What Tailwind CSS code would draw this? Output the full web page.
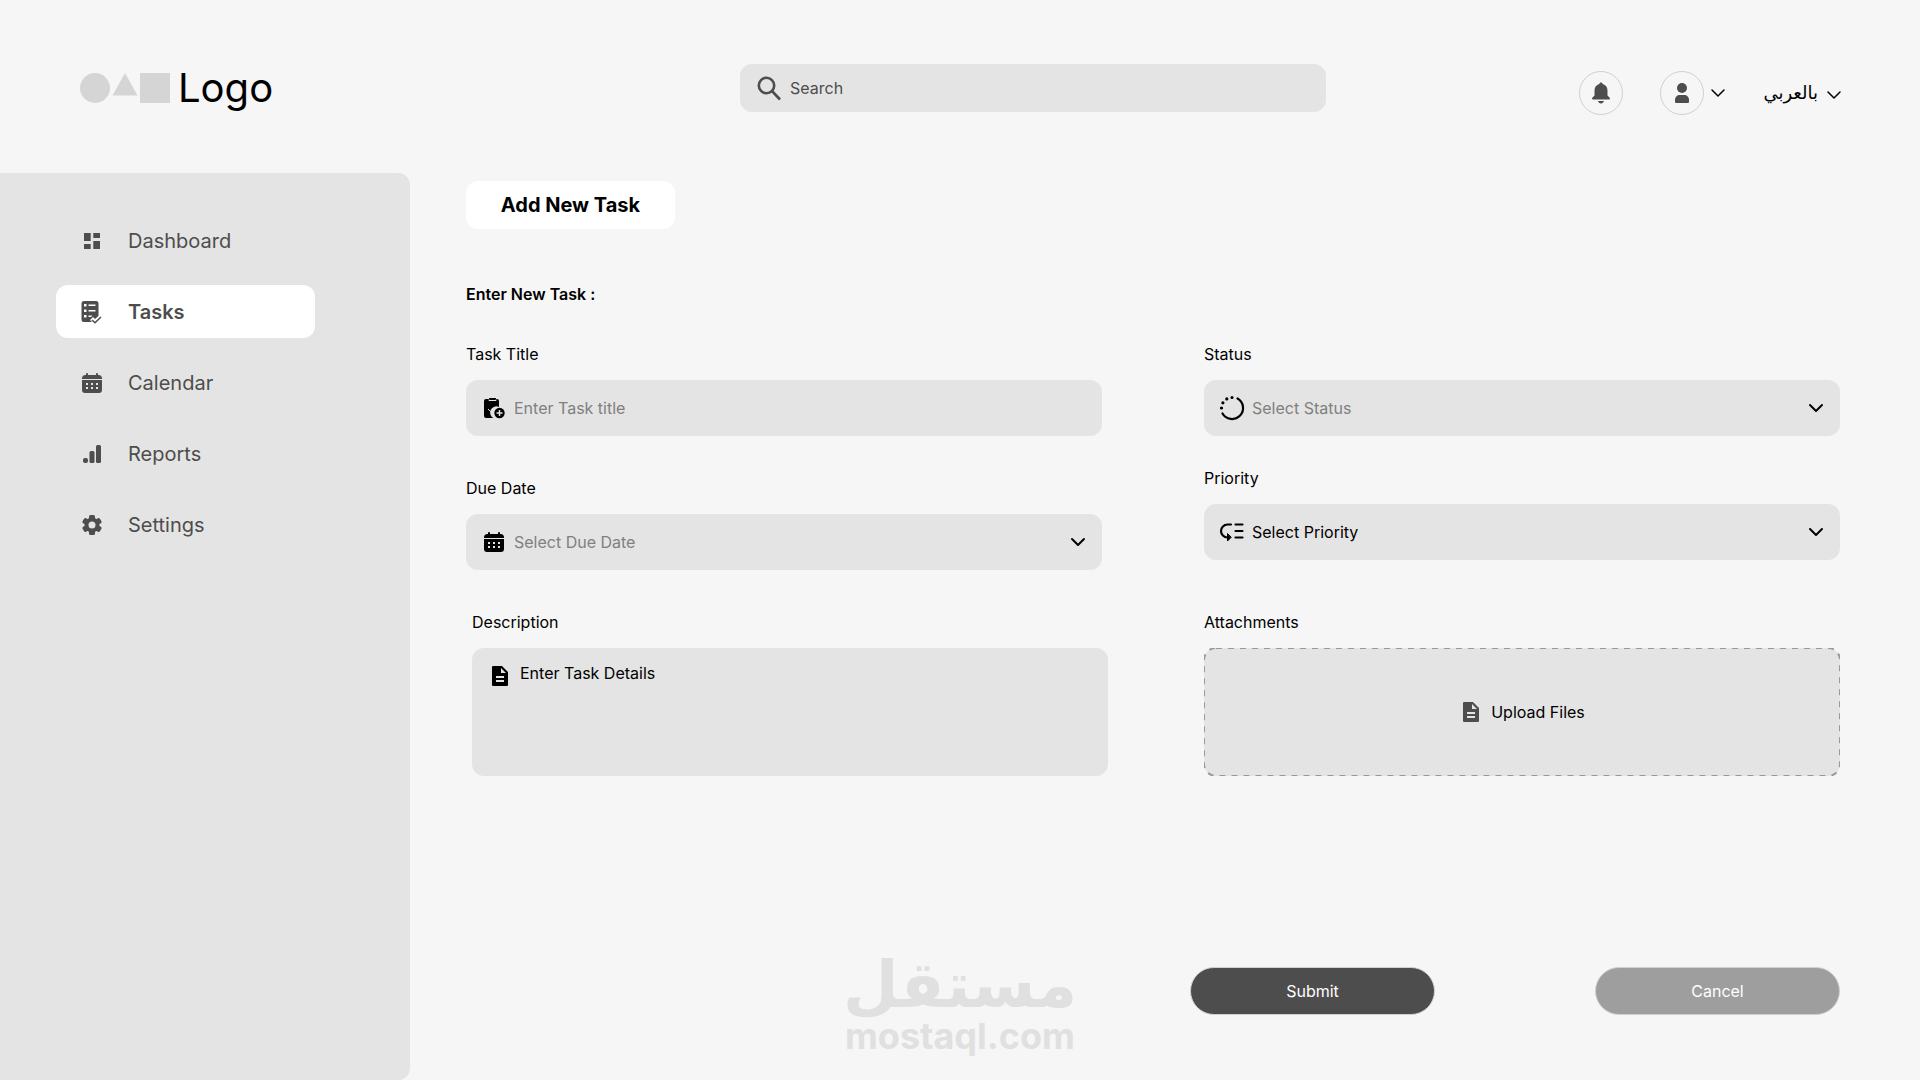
<!DOCTYPE html>
<html lang="en">
<head>
    <meta charset="UTF-8">
    <meta name="viewport" content="width=device-width, initial-scale=1.0">
    <title>Add New Task</title>
    <script src="https://cdn.jsdelivr.net/npm/@tailwindcss/browser@4"></script>
</head>
<body class="relative flex min-h-screen flex-col bg-[#f6f6f6] font-['Inter','DejaVu_Sans',sans-serif] text-base text-black">

    <!-- shared icons -->
    <svg class="hidden">
        <symbol id="calendar" viewBox="0 0 24 24">
            <path fill="currentColor" d="M6 3a1 1 0 0 1 2 0v1h8V3a1 1 0 0 1 2 0v1h.5A3.5 3.5 0 0 1 22 7.5V8H2v-.5A3.5 3.5 0 0 1 5.500 4H6z"/>
            <path fill="currentColor" fill-rule="evenodd" d="M2 9h20v10a3 3 0 0 1-3 3H5a3 3 0 0 1-3-3zM6 12v2h2v-2zm5 0v2h2v-2zm5 0v2h2v-2zM6 16v2h2v-2zm5 0v2h2v-2zm5 0v2h2v-2z"/>
        </symbol>
        <symbol id="file" viewBox="0 0 24 24">
            <path fill="currentColor" fill-rule="evenodd" d="M5 2h9l6 6v13a1 1 0 0 1-1 1H5a1 1 0 0 1-1-1V3a1 1 0 0 1 1-1zm8 2v5h5zM8 12v2h8v-2zm0 4v2h8v-2z"/>
        </symbol>
        <symbol id="chevron" viewBox="0 0 16 16">
            <path fill="none" stroke="currentColor" stroke-linecap="round" stroke-linejoin="round" d="m2 5 6 6 6-6"/>
        </symbol>
    </svg>

    <header class="grid grid-cols-[660fr_586fr_514fr] items-start px-20 pt-16 pb-[58px]">
        <a href="#" class="flex items-center gap-[7px] text-[40px] leading-[48px]">
            <svg class="h-[30px] w-[91px] text-[#d5d5d5]" viewBox="0 0 91 30" fill="currentColor">
                <circle cx="15" cy="15" r="15"/>
                <path d="m45 0 12.500 22.500h-25z"/>
                <path d="M60 0h30v30H60z"/>
            </svg>
            <span>Logo</span>
        </a>

        <label class="flex h-12 items-center gap-2 rounded-xl bg-[#e4e4e4] px-4 text-[#4d4d4d]">
            <svg class="size-[26px]" viewBox="0 0 26 26" fill="none" stroke="currentColor" stroke-width="2.600">
                <circle cx="10.500" cy="10.500" r="7.700"/>
                <path d="m16 16 8 8.500"/>
            </svg>
            <input type="search" aria-label="Search" placeholder="Search" class="min-w-0 flex-1 bg-transparent outline-none placeholder:text-[#4d4d4d]">
        </label>

        <div class="-mr-0.5 flex items-center justify-end gap-[37px] pt-[7px]">
            <button type="button" aria-label="Notifications" class="flex size-11 items-center justify-center rounded-full border border-[#d0d0d0] text-[#4d4d4d]">
                <svg class="size-6" viewBox="0 0 24 24" fill="currentColor">
                    <path d="M12 1.500c.9 0 1.500.6 1.700 1.400 3 .8 4.800 3.300 4.800 6.600v5l2.200 2.300c.6.700.3 1.700-.7 1.700H4c-1 0-1.300-1-.7-1.700l2.200-2.300v-5c0-3.300 1.800-5.800 4.800-6.600.2-.8.8-1.400 1.700-1.400zM9 20h6c-.4 1.500-1.500 2.500-3 2.500S9.400 21.500 9 20z"/>
                </svg>
            </button>
            <button type="button" aria-label="Account" class="flex items-center gap-1.5">
                <span class="flex size-11 items-center justify-center rounded-full border border-[#d0d0d0] text-[#4d4d4d]">
                    <svg class="size-6" viewBox="0 0 24 24" fill="currentColor">
                        <circle cx="12" cy="7" r="5"/>
                        <path d="M10 14h4c3 0 5 2 5 5v1.500c0 1-.5 1.500-1.500 1.500h-11C5.500 22 5 21.500 5 20.500V19c0-3 2-5 5-5z"/>
                    </svg>
                </span>
                <svg class="size-4 stroke-[1.5]"><use href="#chevron"/></svg>
            </button>
            <button type="button" class="flex items-center gap-2 text-lg">
                <span lang="ar" dir="rtl">بالعربي</span>
                <svg class="mt-1 size-4 stroke-[1.5]"><use href="#chevron"/></svg>
            </button>
        </div>
    </header>

    <div class="flex flex-1">
        <aside class="w-[410px] shrink-0 rounded-r-xl bg-[#e4e4e4] pt-[41px] pr-[95px] pl-14">
            <nav class="flex flex-col gap-[18px] text-xl text-[#4d4d4d]">
                <a href="#" class="flex h-[53px] items-center gap-6 rounded-xl px-6">
                    <svg class="size-6" viewBox="0 0 24 24" fill="currentColor"><path d="M4 4h6.700v8H4zM4 15h6.700v5H4zM13.300 4H20v5h-6.700zM13.300 12H20v8h-6.700z"/></svg>
                    Dashboard
                </a>
                <a href="#" class="flex h-[53px] items-center gap-6 rounded-xl bg-white px-6 font-semibold">
                    <svg class="size-6" viewBox="0 0 24 24">
                        <path fill="currentColor" fill-rule="evenodd" d="M4 1h12a2.500 2.500 0 0 1 2.500 2.500V16L15 19l-2-2-3 3 2 2H4a2.500 2.500 0 0 1-2.500-2.500v-16A2.500 2.500 0 0 1 4 1zm0 3v2.500h2.500V4zm4.500.5v1.500h7V4.500zM4 9.500V12h2.500V9.500zm4.500.5v1.500h7V10zM4 15v2.500h2.500V15zm4.500.5V17H11l1.500-1.500z"/>
                        <path fill="none" stroke="currentColor" stroke-width="1.500" d="m12 20 3 2.800 6-5.800"/>
                    </svg>
                    Tasks
                </a>
                <a href="#" class="flex h-[53px] items-center gap-6 rounded-xl px-6">
                    <svg class="size-6"><use href="#calendar"/></svg>
                    Calendar
                </a>
                <a href="#" class="flex h-[53px] items-center gap-6 rounded-xl px-6">
                    <svg class="size-6" viewBox="0 0 24 24" fill="currentColor">
                        <rect x="3" y="16" width="5" height="5" rx="2"/>
                        <rect x="9.500" y="9" width="5" height="12" rx="1.500"/>
                        <rect x="16" y="3" width="5" height="18" rx="1.500"/>
                    </svg>
                    Reports
                </a>
                <a href="#" class="flex h-[53px] items-center gap-6 rounded-xl px-6">
                    <svg class="size-6" viewBox="0 0 24 24" fill="currentColor">
                        <circle cx="12" cy="12" r="7.500"/>
                        <rect x="9" y="2" width="6" height="20" rx="1.500"/>
                        <rect x="9" y="2" width="6" height="20" rx="1.500" transform="rotate(60 12 12)"/>
                        <rect x="9" y="2" width="6" height="20" rx="1.500" transform="rotate(120 12 12)"/>
                        <circle cx="12" cy="12" r="3.500" fill="#e4e4e4"/>
                    </svg>
                    Settings
                </a>
            </nav>
        </aside>

        <main class="flex min-w-0 flex-1 flex-col pt-2 pr-20 pb-[65px] pl-14">
            <h1 class="flex h-12 w-[209px] items-center justify-center rounded-xl bg-white text-xl font-bold">Add New Task</h1>
            <h2 class="mt-[53px] font-semibold">Enter New Task :</h2>

            <form class="mt-9 flex flex-1 flex-col">
                <div class="grid grid-cols-2 gap-[102px]">
                    <div class="flex flex-col gap-10">
                        <div>
                            <label for="title">Task Title</label>
                            <div class="mt-3.5 flex h-14 items-center gap-2 rounded-xl bg-[#e4e4e4] px-4">
                                <svg class="size-6" viewBox="0 0 24 24">
                                    <path fill="currentColor" d="M4 3h3V2.500C7 2 7.500 2 8 2h5c.5 0 1 0 1 .5V3h1a2 2 0 0 1 2 2v6a6 6 0 0 0-5.500 11H4a2 2 0 0 1-2-2V5a2 2 0 0 1 2-2z"/>
                                    <path fill="none" stroke="#e4e4e4" d="M7 3.500v1h7v-1M6 13l2.500 2.500L13 11"/>
                                    <circle cx="17.500" cy="17" r="5.200" fill="currentColor"/>
                                    <path stroke="#e4e4e4" stroke-width="1.500" d="M17.500 14v6M14.500 17h6"/>
                                </svg>
                                <input id="title" type="text" placeholder="Enter Task title" class="min-w-0 flex-1 bg-transparent outline-none placeholder:text-[#808080]">
                            </div>
                        </div>
                        <div>
                            <label for="due">Due Date</label>
                            <div class="mt-3.5 flex h-14 items-center gap-2 rounded-xl bg-[#e4e4e4] px-4">
                                <svg class="size-6"><use href="#calendar"/></svg>
                                <input id="due" type="text" placeholder="Select Due Date" class="min-w-0 flex-1 bg-transparent outline-none placeholder:text-[#808080]">
                                <svg class="size-4 stroke-2"><use href="#chevron"/></svg>
                            </div>
                        </div>
                        <div class="-mr-1.5 ml-1.5">
                            <label for="details">Description</label>
                            <div class="mt-3.5 flex h-32 items-start gap-2 rounded-xl bg-[#e4e4e4] px-4 py-[13px]">
                                <svg class="mt-[3px] size-6"><use href="#file"/></svg>
                                <textarea id="details" placeholder="Enter Task Details" class="h-full min-w-0 flex-1 resize-none bg-transparent outline-none placeholder:text-black"></textarea>
                            </div>
                        </div>
                    </div>

                    <div class="flex flex-col">
                        <div>
                            <label for="status">Status</label>
                            <div class="mt-3.5 flex h-14 items-center gap-2 rounded-xl bg-[#e4e4e4] px-4">
                                <svg class="size-6 overflow-visible" viewBox="0 0 24 24" fill="none" stroke="currentColor" stroke-width="2.200" stroke-linecap="round">
                                    <path d="M17.500 2.500A11 11 0 1 1 2.500 17.500"/>
                                    <path stroke-width="3.200" d="M12 1.500h.01M6.800 2.900h.01M2.900 6.800h.01M1.500 12h.01"/>
                                </svg>
                                <select id="status" class="min-w-0 flex-1 appearance-none bg-transparent text-[#808080] outline-none">
                                    <option>Select Status</option>
                                </select>
                                <svg class="size-4 stroke-2"><use href="#chevron"/></svg>
                            </div>
                        </div>
                        <div class="mt-[30px]">
                            <label for="priority">Priority</label>
                            <div class="mt-3.5 flex h-14 items-center gap-2 rounded-xl bg-[#e4e4e4] px-4">
                                <svg class="size-6 overflow-visible" viewBox="0 0 24 24" fill="none" stroke="currentColor" stroke-width="2.200" stroke-linecap="round">
                                    <path d="M11 4.500H7.500a6.500 6.500 0 0 0 0 13H8M15.500 4.500H22.500M15.500 11H22.500M15.500 17.500H22.500"/>
                                    <path fill="currentColor" stroke-width="1" stroke-linejoin="round" d="M7.500 14v7l3.500-3.500z"/>
                                </svg>
                                <select id="priority" class="min-w-0 flex-1 appearance-none bg-transparent outline-none">
                                    <option>Select Priority</option>
                                </select>
                                <svg class="size-4 stroke-2"><use href="#chevron"/></svg>
                            </div>
                        </div>
                        <div class="mt-[50px]">
                            <label for="files">Attachments</label>
                            <label class="relative mt-3.5 flex h-32 cursor-pointer items-center justify-center gap-2">
                                <svg class="absolute inset-0 size-full">
                                    <rect width="100%" height="100%" rx="12" fill="#e4e4e4" stroke="#999" stroke-width="2" stroke-dasharray="6 6"/>
                                </svg>
                                <svg class="relative size-6 text-[#4d4d4d]"><use href="#file"/></svg>
                                <span class="relative">Upload Files</span>
                                <input id="files" type="file" multiple class="sr-only">
                            </label>
                        </div>
                    </div>
                </div>

                <div class="mt-auto flex justify-end gap-40">
                    <button type="submit" class="h-12 w-[245px] rounded-full border border-[#d0d0d0] bg-[#4d4d4d] text-white">Submit</button>
                    <button type="button" class="h-12 w-[245px] rounded-full border border-[#d0d0d0] bg-[#9e9e9e] text-white">Cancel</button>
                </div>
            </form>
        </main>
    </div>

    <!-- watermark -->
    <div class="pointer-events-none absolute inset-x-0 bottom-6 flex flex-col items-center font-bold text-[#e0e0e0]">
        <span lang="ar" dir="rtl" class="text-[64px] leading-[64px]">مستقل</span>
        <span class="text-4xl leading-10">mostaql.com</span>
    </div>
</body>
</html>
